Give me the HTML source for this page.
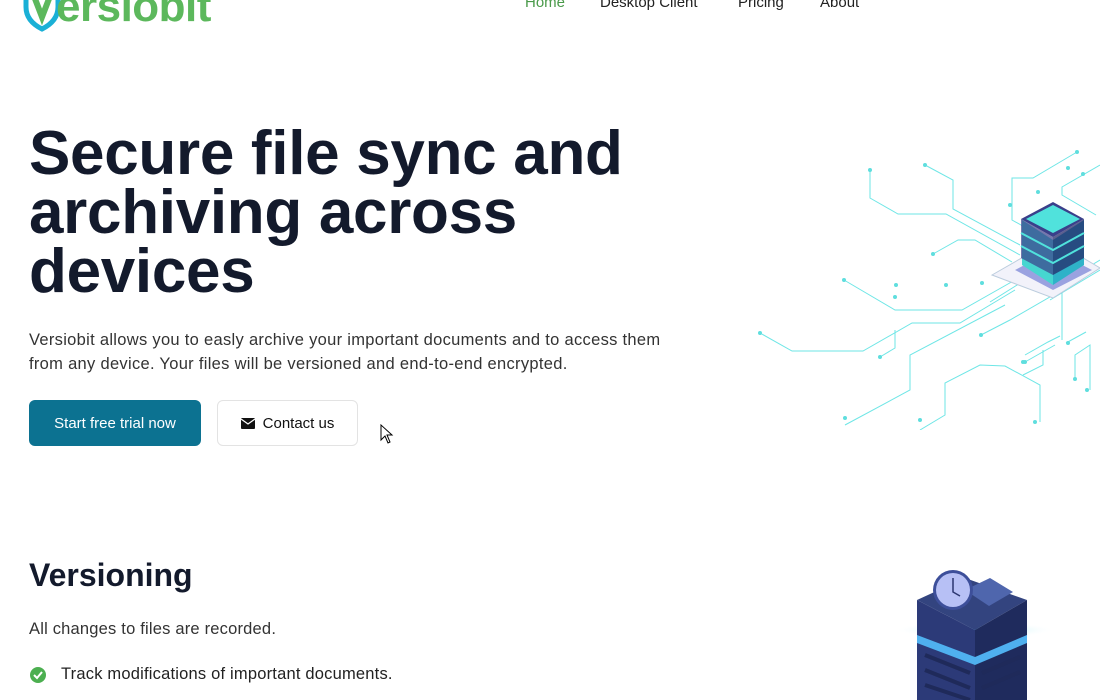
<!DOCTYPE html>
<html><head><style>
*{margin:0;padding:0;box-sizing:border-box}
body{width:1100px;height:700px;overflow:hidden;background:#fff;font-family:"Liberation Sans",sans-serif;color:#1a1d2b;position:relative}
.logo{position:absolute;left:22px;top:-18px;font-size:44px;font-weight:bold;color:#5cb85c;letter-spacing:-0.5px;white-space:nowrap}
.nav{position:absolute;top:-6px;font-size:15px;color:#222}
h1{position:absolute;left:29px;top:124px;font-size:62px;line-height:59px;font-weight:bold;color:#131a2c;letter-spacing:-0.3px;white-space:nowrap}
.p{position:absolute;left:29px;top:328px;font-size:16.5px;line-height:24px;color:#333;letter-spacing:0.3px;white-space:nowrap}
.b1{position:absolute;left:29px;top:400px;width:172px;height:46px;background:#0c7291;color:#fff;border-radius:6px;font-size:15px;display:flex;align-items:center;justify-content:center}
.b2{position:absolute;left:217px;top:400px;width:141px;height:46px;border:1px solid #e3e3e3;border-radius:6px;font-size:15px;display:flex;align-items:center;justify-content:center;gap:8px;color:#111}
h2{position:absolute;left:29px;top:557px;font-size:32px;font-weight:bold;color:#131a2c}
.p2{position:absolute;left:29px;top:620px;font-size:16.5px;color:#333;letter-spacing:0.2px}
.li{position:absolute;left:29px;top:665px;font-size:16.5px;color:#222;display:flex;align-items:center;gap:14px;letter-spacing:0.2px}
</style></head><body>
<div class="logo"><svg width="40" height="48" viewBox="0 0 40 48" style="vertical-align:middle;margin-right:-6px"><path d="M4 4 L4 22 Q4 36 20 44 Q36 36 36 22 L36 4" fill="none" stroke="#1ab0d6" stroke-width="5"/><path d="M10 6 L20 32 L30 6" fill="none" stroke="#5cb85c" stroke-width="6"/></svg>ersiobit</div>
<div class="nav" style="left:525px;color:#4a9a4a">Home</div>
<div class="nav" style="left:600px">Desktop Client</div>
<div class="nav" style="left:738px">Pricing</div>
<div class="nav" style="left:820px">About</div>
<h1>Secure file sync and<br>archiving across<br>devices</h1>
<div class="p">Versiobit allows you to easly archive your important documents and to access them<br>from any device. Your files will be versioned and end-to-end encrypted.</div>
<div class="b1">Start free trial now</div>
<div class="b2"><svg width="14" height="11" viewBox="0 0 14 11"><rect width="14" height="11" rx="1" fill="#111"/><path d="M0 1 L7 6 L14 1" fill="none" stroke="#fff" stroke-width="1.3"/></svg>Contact us</div>
<svg style="position:absolute;left:380px;top:424px" width="14" height="20" viewBox="0 0 14 20"><path d="M1 1 L1 16 L5 12 L8 19 L10 18 L7 11 L12 11 Z" fill="#fff" stroke="#000"/></svg>
<svg style="position:absolute;left:750px;top:140px" width="350" height="290" viewBox="0 0 350 290" fill="none" stroke="#6ee6e6" stroke-width="1">
<path d="M120 30 V58 L148 74 H196 L270 115"/><path d="M175 25 L203 40 V69 L270 105"/><path d="M10 193 L42 211 H113 L162 183 H210 L265 150"/><path d="M94 140 L145 170 H212 L265 140"/><path d="M95 285 L160 250 V215 L255 165"/><path d="M170 290 L195 275 V243 L230 225 L255 226 L290 245 V282"/><path d="M327 12 L283 38 H262 V80 L280 90"/><path d="M350 25 L312 47 V55 L346 75"/><path d="M183 114 L208 100 H225 L262 122"/><path d="M130 217 L145 208 V190"/><path d="M231 195 L260 180 L312 150 V200"/><path d="M275 215 L298 202 L310 196"/><path d="M275 222 L305 205"/><path d="M273 235 L293 225 V210"/><path d="M240 162 L275 140"/><path d="M325 240 V215 L340 205 V250"/><path d="M316 203 L336 192"/><path d="M300 150 L350 120"/><path d="M300 160 L350 130"/>
<g fill="#5fdede" stroke="none"><circle cx="120" cy="30" r="2"/><circle cx="175" cy="25" r="2"/><circle cx="10" cy="193" r="2"/><circle cx="94" cy="140" r="2"/><circle cx="95" cy="278" r="2"/><circle cx="170" cy="280" r="2"/><circle cx="327" cy="12" r="2"/><circle cx="318" cy="28" r="2"/><circle cx="333" cy="34" r="2"/><circle cx="183" cy="114" r="2"/><circle cx="130" cy="217" r="2"/><circle cx="231" cy="195" r="2"/><circle cx="275" cy="222" r="2"/><circle cx="285" cy="282" r="2"/><circle cx="325" cy="239" r="2"/><circle cx="337" cy="250" r="2"/><circle cx="318" cy="203" r="2"/><circle cx="146" cy="145" r="2"/><circle cx="196" cy="145" r="2"/><circle cx="145" cy="157" r="2"/><circle cx="232" cy="143" r="2"/><circle cx="273" cy="222" r="2"/><circle cx="260" cy="65" r="2"/><circle cx="288" cy="52" r="2"/></g>
<path d="M242 135 L303 100 L350 128 L303 158 Z" fill="#f2f2fa" stroke="#bcd"/>
<path d="M265 130 L303 110 L342 130 L303 150 Z" fill="#9aa2e0" stroke="none"/>
<path d="M272 80 V125 L303 145 V100 Z" fill="#46d6d0" stroke="none"/><path d="M303 100 V145 L334 125 V80 Z" fill="#2fb2c8" stroke="none"/>
<path d="M271 79 L303 62 L334 79 L303 97 Z" fill="#3a3f8a" stroke="none"/>
<path d="M271 79 V118 L303 135 V97 Z" fill="#3a3f8a" stroke="none" opacity=".7"/><path d="M303 97 V135 L334 118 V79 Z" fill="#26296a" stroke="none" opacity=".75"/>
<path d="M276 79 L303 65 L330 79 L303 93 Z" fill="#50e2dc" stroke="none"/>
<path d="M271 93 L303 110 L334 93 M271 106 L303 123 L334 106" stroke="#50e2dc" stroke-width="2"/>
</svg>
<h2>Versioning</h2>
<div class="p2">All changes to files are recorded.</div>
<div class="li"><svg width="18" height="18" viewBox="0 0 18 18"><circle cx="9" cy="9" r="8" fill="#4caf50"/><path d="M5 9 L8 12 L13 6" fill="none" stroke="#fff" stroke-width="2"/></svg>Track modifications of important documents.</div>
<svg style="position:absolute;left:895px;top:560px" width="160" height="140" viewBox="0 0 160 140">
<defs><radialGradient id="g" cx=".5" cy=".5" r=".5"><stop offset="0" stop-color="#7ee6f5"/><stop offset="1" stop-color="#fff" stop-opacity="0"/></radialGradient></defs>
<ellipse cx="80" cy="70" rx="80" ry="8" fill="url(#g)"/>
<path d="M22 40 L70 18 L132 40 L80 70 Z" fill="#33447f"/>
<path d="M22 40 V140 H80 V70 Z" fill="#2c3a78"/><path d="M80 70 V140 H132 V40 Z" fill="#1f2b5d"/>
<path d="M22 75 L80 97 V105 L22 83 Z" fill="#4fb0ef"/><path d="M80 97 L132 75 V83 L80 105 Z" fill="#4fb0ef"/>
<g stroke="#1f2a5a" stroke-width="4"><path d="M30 95 L75 113 M30 110 L75 128 M30 125 L75 140"/><path d="M87 113 L125 97 M87 128 L125 112"/></g>
<path d="M70 30 L95 18 L118 32 L94 46 Z" fill="#4f66ad"/>
<circle cx="58" cy="30" r="20" fill="#3d4f9a"/><circle cx="58" cy="30" r="17" fill="#b7c0f5"/><path d="M58 18 V32 L65 36" stroke="#2b3670" stroke-width="1.5" fill="none"/>
</svg>
</body></html>
